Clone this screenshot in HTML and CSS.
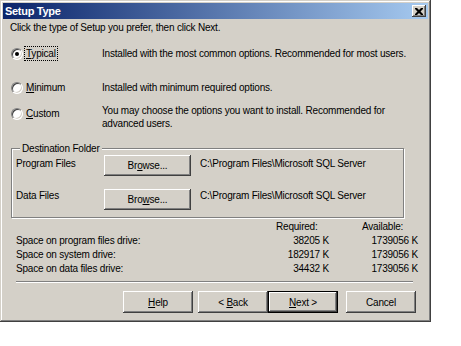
FILE: index.html
```html
<!DOCTYPE html>
<html lang="en">
<head>
    <meta charset="UTF-8">
    <title>Setup Type</title>
    <link rel="stylesheet" href="styles.css">
</head>
<body>
    <div class="window">
        <div class="titlebar">
            <span class="title">Setup Type</span>
            <span class="close">
                <svg width="8" height="7" viewBox="0 0 8 7"><path d="M0 0h2l2 2 2-2h2v1l-2.5 2.5 2.5 2.5v1h-2l-2-2-2 2h-2v-1l2.5-2.5-2.5-2.5z" fill="#000"/></svg>
            </span>
        </div>

        <div class="content">
            <p class="intro">Click the type of Setup you prefer, then click Next.</p>

            <!-- Setup types -->
            <div class="option typical">
                <div class="choice"><span class="radio checked"></span><span class="focus"><u>T</u>ypical</span></div>
                <p class="desc">Installed with the most common options. Recommended for most users.</p>
            </div>
            <div class="option minimum">
                <div class="choice"><span class="radio"></span><span class="name"><u>M</u>inimum</span></div>
                <p class="desc">Installed with minimum required options.</p>
            </div>
            <div class="option custom">
                <div class="choice"><span class="radio"></span><span class="name"><u>C</u>ustom</span></div>
                <p class="desc">You may choose the options you want to install. Recommended for advanced users.</p>
            </div>

            <!-- Destination folder -->
            <div class="group">
                <div class="group-title">Destination Folder</div>
                <div class="folder-row first">
                    <span class="folder-label">Program Files</span>
                    <button class="btn browse">Br<u>o</u>wse...</button>
                    <span class="folder-path">C:\Program Files\Microsoft SQL Server</span>
                </div>
                <div class="folder-row second">
                    <span class="folder-label">Data Files</span>
                    <button class="btn browse">Bro<u>w</u>se...</button>
                    <span class="folder-path">C:\Program Files\Microsoft SQL Server</span>
                </div>
            </div>

            <!-- Disk space -->
            <div class="space">
                <span></span><span class="head required">Required:</span><span class="head available">Available:</span>
                <span>Space on program files drive:</span><span class="num">38205 K</span><span class="num">1739056 K</span>
                <span>Space on system drive:</span><span class="num">182917 K</span><span class="num">1739056 K</span>
                <span>Space on data files drive:</span><span class="num">34432 K</span><span class="num">1739056 K</span>
            </div>

            <div class="separator"></div>

            <div class="buttons">
                <button class="btn help"><u>H</u>elp</button>
                <button class="btn back">&lt; <u>B</u>ack</button>
                <button class="btn next default"><u>N</u>ext &gt;</button>
                <button class="btn cancel">Cancel</button>
            </div>
        </div>
    </div>
</body>
</html>
```

FILE: styles.css
```css
body {
    margin: 0;
    background: #fff;
    font-family: "Liberation Sans", Arial, sans-serif;
    font-size: 10px;
    letter-spacing: -0.2px;
    color: #000;
}
u {
    text-decoration: underline;
    text-underline-offset: 1px;
}
.window {
    box-sizing: border-box;
    width: 431px;
    height: 322px;
    padding: 3px;
    background: #d4d0c8;
    box-shadow: inset -1px -1px #404040, inset 1px 1px #d4d0c8, inset -2px -2px #808080, inset 2px 2px #fff;
}
.titlebar {
    height: 16px;
    display: flex;
    align-items: center;
    justify-content: space-between;
    padding: 0 2px 0 2px;
    background: linear-gradient(to right, #0a246a, #a6caf0);
}
.title {
    color: #fff;
    font-weight: bold;
    font-size: 11px;
    letter-spacing: -0.3px;
    line-height: 16px;
}
.close {
    box-sizing: border-box;
    width: 14px;
    height: 12px;
    display: flex;
    align-items: center;
    justify-content: center;
    background: #d4d0c8;
    box-shadow: inset -1px -1px #404040, inset 1px 1px #fff, inset -2px -2px #808080;
}
.content {
    padding: 2px 0 0 7px;
}
p {
    margin: 0;
}
.intro {
    line-height: 13px;
}
.option {
    display: flex;
    align-items: flex-start;
    line-height: 13px;
}
.typical {
    margin-top: 13px;
}
.minimum {
    margin-top: 21px;
}
.custom {
    margin-top: 10px;
}
.choice {
    width: 92px;
    flex: none;
    display: flex;
    align-items: center;
}
.custom .choice {
    margin-top: 3px;
}
.radio {
    box-sizing: border-box;
    width: 12px;
    height: 12px;
    margin-left: 1px;
    border: 1px solid;
    border-color: #808080 #fff #fff #808080;
    border-radius: 50%;
    display: flex;
    align-items: center;
    justify-content: center;
    background: #fff;
    box-shadow: inset 1px 1px #404040, inset -1px -1px #d4d0c8;
}
.radio.checked::after {
    content: "";
    width: 4px;
    height: 4px;
    border-radius: 50%;
    background: #000;
}
.focus {
    margin-left: 2px;
    padding: 0 1px 0 1px;
    outline: 1px dotted #000;
    outline-offset: 0;
}
.name {
    margin-left: 3px;
}
.desc {
    width: 310px;
}
.group {
    box-sizing: border-box;
    width: 393px;
    height: 70px;
    margin: 18px 0 0 1px;
    padding: 0 0 0 4px;
    border: 1px solid #808080;
    box-shadow: inset 1px 1px #fff, 1px 1px #fff;
    line-height: 13px;
}
.group-title {
    width: max-content;
    height: 13px;
    margin: -7px 0 0 4px;
    padding: 0 2px;
    background: #d4d0c8;
}
.folder-row {
    display: flex;
    align-items: flex-start;
}
.folder-row.first .folder-label,
.folder-row.first .folder-path {
    margin-top: 2px;
}
.folder-row.second {
    margin-top: 13px;
}
.folder-label {
    width: 88px;
    flex: none;
}
.folder-path {
    margin-left: 9px;
}
.btn {
    box-sizing: border-box;
    font-family: inherit;
    font-size: 10px;
    letter-spacing: -0.2px;
    color: #000;
    background: #d4d0c8;
    border: none;
    border-radius: 0;
    padding: 0;
    box-shadow: inset -1px -1px #404040, inset 1px 1px #fff, inset -2px -2px #808080;
}
.browse {
    width: 87px;
    height: 21px;
}
.space {
    display: grid;
    grid-template-columns: 254px 59px 89px;
    grid-template-rows: 14px 14px 14px 14px;
    margin: 2px 0 0 6px;
    line-height: 13px;
}
.space .required {
    padding-left: 6px;
}
.space .available {
    padding-left: 33px;
}
.num {
    text-align: right;
}
.separator {
    width: 397px;
    height: 1px;
    margin: 5px 0 0 6px;
    background: #808080;
    border-bottom: 1px solid #fff;
}
.buttons {
    display: flex;
    margin: 8px 0 0 113px;
}
.buttons .btn {
    width: 70px;
    height: 22px;
}
.buttons .back {
    margin-left: 5px;
}
.buttons .cancel {
    margin-left: 8px;
}
.btn.default {
    border: 1px solid #000;
}
```
